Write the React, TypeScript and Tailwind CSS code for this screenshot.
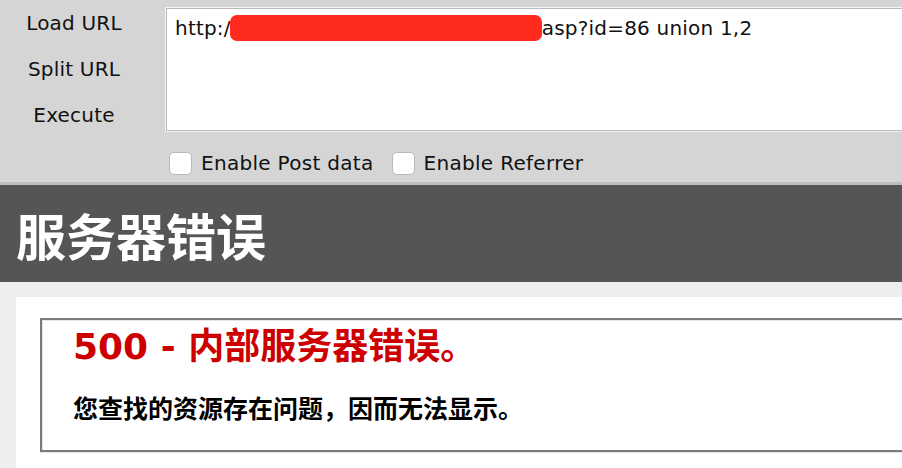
const labels = ['Load URL', 'Split URL', 'Execute'];

function Checkbox({ label }: { label: string }) {
  return (
    <label className="flex items-center gap-[9px]">
      <span className="h-[23px] w-[23px] rounded-[5px] border border-[#b9b9b9] bg-white" />
      <span>{label}</span>
    </label>
  );
}

export default function App() {
  return (
    <div className="h-[468px] w-[902px] overflow-hidden bg-[#eeeeee]">
      {/* hackbar */}
      <div className="flex h-[185px] border-b-[3px] border-[#bdbdbd] bg-[#d5d5d5] font-['DejaVu_Sans',sans-serif] text-[20px] text-[#111]">
        <div className="flex w-[148px] shrink-0 flex-col items-center">
          {labels.map((l) => (
            <div key={l} className="h-[46px] leading-[46px] tracking-[0.2px]">
              {l}
            </div>
          ))}
        </div>
        <div className="ml-[18px] flex flex-col pt-[8px]">
          <div className="h-[123px] w-[760px] border border-[#b9b9b9] bg-white pl-[8px] pt-[6px] leading-[26px] tracking-[0.2px] shadow-[0_0_0_1px_#f4f4f4]">
            http:/
            <span className="inline-block h-[26px] w-[312px] -ml-[1px] rounded-[7px] bg-[#ff2b1e] align-top" />
            asp?id=86 union 1,2
          </div>
          <div className="mt-[17px] flex items-center gap-[18px] pl-[3px] tracking-[0.3px]">
            <Checkbox label="Enable Post data" />
            <Checkbox label="Enable Referrer" />
          </div>
        </div>
      </div>

      {/* IIS error page */}
      <div className="flex h-[97px] items-center bg-[#555555] pl-[16px]">
        <h1 className="font-['Noto_Sans_CJK_SC',sans-serif] text-[50px] font-bold leading-none text-white">
          服务器错误
        </h1>
      </div>
      <div className="pl-[16px] pt-[15px]">
        <div className="w-[900px] bg-white pl-[24px] pt-[21px] pb-[20px]">
          <div className="border-y-2 border-l-2 border-[#7b7b7b] pb-[25px] pl-[31px] pt-[6px] font-['DejaVu_Sans','Noto_Sans_CJK_SC',sans-serif] font-bold shadow-[inset_1px_1px_0_#e6e6e6,0_1px_0_#e6e6e6]">
            <h2 className="text-[36px] leading-[42px] text-[#cc0000]">500 - 内部服务器错误。</h2>
            <h3 className="mt-[26px] text-[25px] leading-[31px] text-black">
              您查找的资源存在问题，因而无法显示。
            </h3>
          </div>
        </div>
      </div>
    </div>
  );
}
